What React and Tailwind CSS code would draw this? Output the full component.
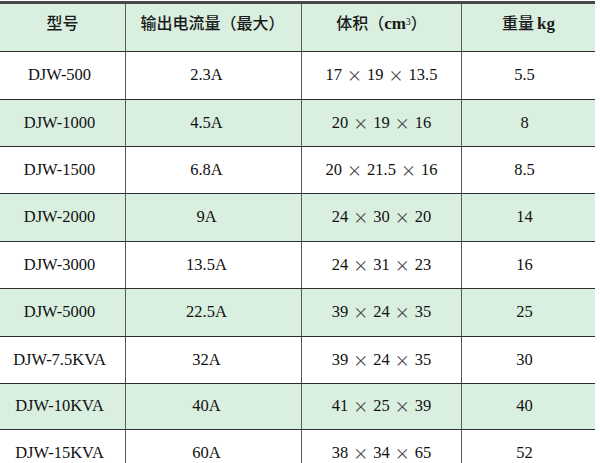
const rows = [
  { model: "DJW-500", current: "2.3A", size: ["17", "19", "13.5"], weight: "5.5", h: "h-[48px]" },
  { model: "DJW-1000", current: "4.5A", size: ["20", "19", "16"], weight: "8", h: "h-[47px]" },
  { model: "DJW-1500", current: "6.8A", size: ["20", "21.5", "16"], weight: "8.5", h: "h-[47px]" },
  { model: "DJW-2000", current: "9A", size: ["24", "30", "20"], weight: "14", h: "h-[48px]" },
  { model: "DJW-3000", current: "13.5A", size: ["24", "31", "23"], weight: "16", h: "h-[47px]" },
  { model: "DJW-5000", current: "22.5A", size: ["39", "24", "35"], weight: "25", h: "h-[48px]" },
  { model: "DJW-7.5KVA", current: "32A", size: ["39", "24", "35"], weight: "30", h: "h-[47px]" },
  { model: "DJW-10KVA", current: "40A", size: ["41", "25", "39"], weight: "40", h: "h-[46px]" },
  { model: "DJW-15KVA", current: "60A", size: ["38", "34", "65"], weight: "52", h: "h-[47px]" },
];

const serif = "font-['Liberation_Serif','Noto_Sans_CJK_SC',serif]";
const cjk = "font-['Noto_Sans_CJK_SC','Liberation_Serif',sans-serif]";

const Times = () => (
  <span className={`${cjk} text-[15px] text-[#444] px-[5px]`}>×</span>
);

export default function App() {
  return (
    <div className="w-[600px] h-[463px] bg-white overflow-hidden">
      <div className="w-[595px] mt-[1px] border-t-[3px] border-[#474747]">
        {/* ── header ── */}
        <div className={`flex h-[48px] bg-[#d9efe0] border-b border-[#2e2e2e] text-[16px] font-medium text-[#1a1a1a] ${cjk}`}>
          <div className="w-[126px] border-r border-[#5a5a5a] flex justify-center pt-[6px]">型号</div>
          <div className="w-[176px] border-r border-[#5a5a5a] flex justify-center pt-[6px] pr-[2px]">
            输出电流量（最大）
          </div>
          <div className="w-[160px] border-r border-[#5a5a5a] flex justify-center pt-[6px]">
            <span>
              体积（<span className={`${serif} text-[17px] font-bold`}>cm</span>
              <sup className={`${serif} text-[10px] relative -top-[4px]`}>3</sup>）
            </span>
          </div>
          <div className="w-[133px] flex justify-center pt-[6px]">
            <span>
              重量<span className={`${serif} text-[17px] font-bold ml-[3px]`}>kg</span>
            </span>
          </div>
        </div>

        {/* ── rows ── */}
        {rows.map((r, i) => (
          <div
            key={r.model}
            className={`flex ${r.h} border-b border-[#2e2e2e] text-[16.5px] text-[#111] ${serif} ${
              i % 2 === 1 ? "bg-[#d9efe0]" : "bg-white"
            }`}
          >
            <div className="w-[126px] border-r border-[#5a5a5a] flex items-center justify-center pr-[6px]">
              {r.model}
            </div>
            <div className="w-[176px] border-r border-[#5a5a5a] flex items-center justify-center pr-[14px]">
              {r.current}
            </div>
            <div className="w-[160px] border-r border-[#5a5a5a] flex items-center justify-center">
              {r.size[0]}
              <Times />
              {r.size[1]}
              <Times />
              {r.size[2]}
            </div>
            <div className="w-[133px] flex items-center justify-center pr-[8px]">{r.weight}</div>
          </div>
        ))}
      </div>
    </div>
  );
}
